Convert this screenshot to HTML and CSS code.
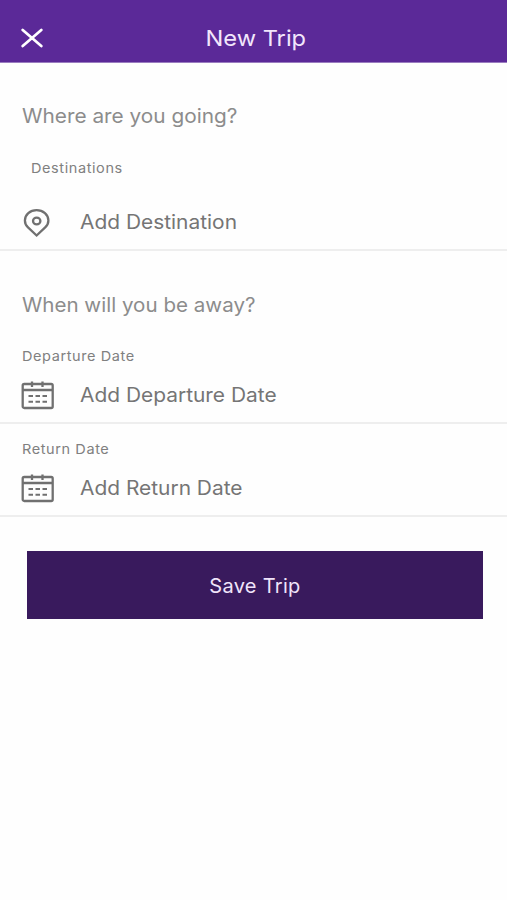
FILE: index.html
```html
<!DOCTYPE html>
<html lang="en">
<head>
<meta charset="utf-8">
<title>New Trip</title>
<link rel="stylesheet" href="styles.css">
</head>
<body>
<header class="bar">
  <button class="close" aria-label="Close">
    <svg width="22" height="20" viewBox="0 0 22 20"><path d="M1.7 1.900 20.3 18.100M20.3 1.900 1.700 18.100"/></svg>
  </button>
  <h1 class="title"><span class="wide">New Trip</span></h1>
</header>
<main>
  <section class="section">
    <h2 class="question"><span class="wide">Where are you going?</span></h2>
    <div class="field field-destination">
      <div class="label label-inset"><span class="wide">Destinations</span></div>
      <div class="row row-destination">
        <svg class="icon" width="32" height="32" viewBox="0 0 32 32"><path d="M15.600 29.500 7 21.400C4.900 19.400 3.900 17.400 3.900 14.500 3.900 8.500 9.100 4.100 15.600 4.100S27.400 8.500 27.400 14.500C27.400 17.400 26.400 19.400 24.200 21.400Z"/><ellipse cx="15.700" cy="15" rx="3.700" ry="3.400"/></svg>
        <span class="wide">Add Destination</span>
      </div>
    </div>
  </section>
  <section class="section">
    <h2 class="question"><span class="wide wide-when">When will you be away?</span></h2>
    <div class="field field-departure">
      <div class="label"><span class="wide">Departure Date</span></div>
      <div class="row">
        <svg class="icon" width="33" height="32" viewBox="0 0 33 32"><rect x="1.700" y="5" width="30" height="24" rx="1.500"/><path d="M1.500 11H31.500M11 2.500V8M21.500 2.500V8"/><path class="days" d="M7.500 17H26M7.500 22.800H26"/></svg>
        <span class="wide">Add Departure Date</span>
      </div>
    </div>
    <div class="field field-return">
      <div class="label"><span class="wide">Return Date</span></div>
      <div class="row">
        <svg class="icon" width="33" height="32" viewBox="0 0 33 32"><rect x="1.700" y="5" width="30" height="24" rx="1.500"/><path d="M1.500 11H31.500M11 2.500V8M21.500 2.500V8"/><path class="days" d="M7.500 17H26M7.500 22.800H26"/></svg>
        <span class="wide">Add Return Date</span>
      </div>
    </div>
  </section>
  <button class="save">Save Trip</button>
</main>
</body>
</html>
```
FILE: styles.css
```css
* { box-sizing: border-box; }
body { margin: 0; min-height: 900px; background: #fefefe; font-family: Inter, "Liberation Sans", sans-serif; color: #808080; }
button { border: 0; padding: 0; background: none; font: inherit; color: inherit; }
.wide { display: inline-block; transform: scaleX(1.067); transform-origin: left center; }
.wide-when { transform: scaleX(1.055); }
.bar { display: grid; grid-template-columns: 64px 1fr 60px; align-items: center; height: 63px; padding-top: 13px; background: #5b2998; border-bottom: 1px solid #9a7cc0; }
.close { display: flex; padding-left: 21px; }
.close svg { fill: none; stroke: #fff; stroke-width: 2.7; stroke-linecap: round; }
.title { margin: 0; text-align: center; font-size: 22px; line-height: 28px; font-weight: 400; color: #f2e6fc; }
.title .wide { transform: scaleX(1.075); transform-origin: center; }
.section { padding-top: 39px; }
.section + .section { padding-top: 40px; }
.question { margin: 0; padding-left: 22px; font-size: 19.500px; line-height: 28px; font-weight: 400; color: #8c8c8c; }
.field { border-bottom: 2px solid #eee; }
.label { padding-left: 21.600px; font-size: 13.600px; line-height: 20px; letter-spacing: .55px; }
.label-inset { padding-left: 30.600px; }
.field-destination { height: 121px; padding-top: 28px; }
.field-departure { height: 105px; padding-top: 27px; }
.field-return { height: 93px; padding-top: 15px; }
.row { display: flex; align-items: center; gap: 25.500px; height: 57px; padding-left: 21px; font-size: 19.600px; color: #757575; }
.row-destination { gap: 26.500px; height: 87px; }
.icon { flex: none; fill: none; stroke: #707070; stroke-width: 2.300; }
.days { stroke-width: 2; stroke-dasharray: 4.500 2.500; }
.save { display: block; width: 456px; height: 68px; margin: 34px 0 0 27px; background: #391a5d; font-size: 20px; letter-spacing: .3px; line-height: 28px; padding-top: 2px; color: #f0e4fa; }
```
